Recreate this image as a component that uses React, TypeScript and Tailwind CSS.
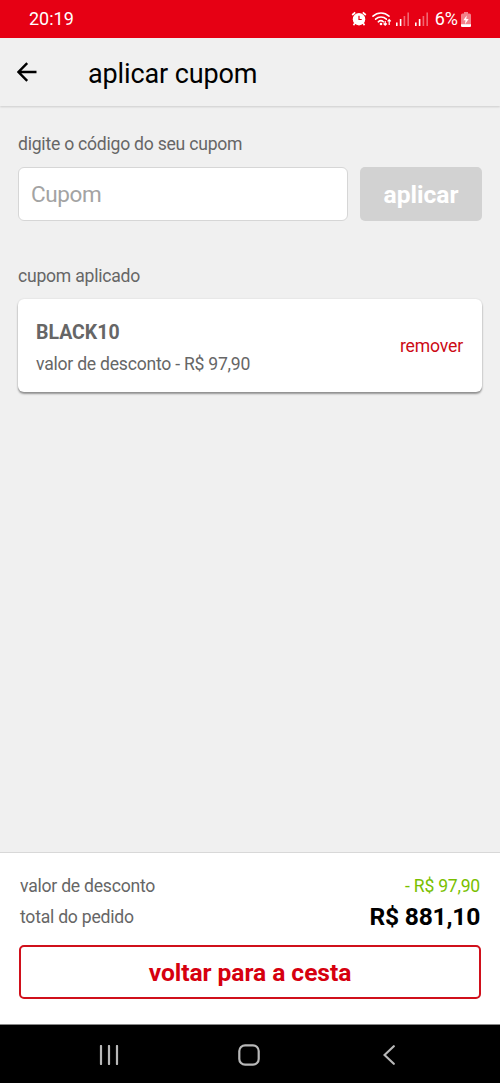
const AlarmIcon = () => (
  <svg width="16" height="16" viewBox="0 0 16 16" fill="none">
    <path d="M1.2 4 4.2 1.3M14.8 4 11.8 1.3" stroke="#fff" strokeWidth="1.7" />
    <circle cx="8" cy="8.2" r="6.2" fill="#fff" />
    <path d="m3.8 12.2-1.3 2M12.2 12.2l1.3 2" stroke="#fff" strokeWidth="1.6" />
    <path d="M8 4.8v3.7h2.7" stroke="#e60014" strokeWidth="1.2" />
  </svg>
);

const WifiIcon = () => (
  <svg width="20" height="16" viewBox="0 0 20 16" fill="none">
    <g stroke="#fff" strokeWidth="1.6" strokeLinecap="round">
      <path d="M1 5.2C5.6 1 12.4 1 17 5.2" />
      <path d="M3.6 8.1c3.1-2.8 7.7-2.8 10.8 0" />
      <path d="M6.3 10.8c1.6-1.4 3.6-1.4 5 0" />
    </g>
    <circle cx="9" cy="13" r="1.3" fill="#fff" />
    <path
      d="M13.2 10v4M11.6 12.5l1.6 1.7 1.6-1.7M17.2 14V8.8M15.6 10.3l1.6-1.7 1.6 1.7"
      stroke="#fff"
      strokeWidth="1.2"
    />
  </svg>
);

const SignalIcon = () => (
  <svg width="14" height="14" viewBox="0 0 14 14" fill="#fff">
    <rect x="0" y="10.5" width="1.6" height="3.5" />
    <rect x="3.8" y="7" width="1.6" height="7" />
    <rect x="7.6" y="4" width="1.6" height="10" opacity="0.4" />
    <rect x="11.4" y="0.5" width="1.6" height="13.5" opacity="0.4" />
  </svg>
);

const BatteryIcon = () => (
  <svg width="10" height="15" viewBox="0 0 10 15">
    <path
      d="M3 0h4v1.5h1.5Q10 1.5 10 3v10.5Q10 15 8.5 15h-7Q0 15 0 13.5V3q0-1.500 1.500-1.500H3z"
      fill="#fff"
      opacity="0.5"
    />
    <path d="M0 12.3h10v1.2Q10 15 8.5 15h-7Q0 15 0 13.5z" fill="#fff" />
    <path d="M5.7 3.5 2.3 8.3h2.2l-.5 3.9 3.7-5.2H5.3z" fill="#fff" />
  </svg>
);

const StatusBar = () => (
  <div className="flex h-[38px] items-center bg-[#e60014] px-[29px] tracking-normal text-white">
    <span className="text-[18px] leading-[38px]">20:19</span>
    <div className="ml-auto flex items-center">
      <AlarmIcon />
      <div className="ml-[5px]">
        <WifiIcon />
      </div>
      <div className="ml-1">
        <SignalIcon />
      </div>
      <div className="ml-[5px]">
        <SignalIcon />
      </div>
      <span className="ml-1.5 mr-[3px] text-[18px] leading-[38px]">6%</span>
      <BatteryIcon />
    </div>
  </div>
);

const Header = () => (
  <header className="flex h-[68px] items-center bg-[#f0f0f0] pl-[17px] shadow-[0_1px_2px_rgba(0,0,0,0.15)]">
    <button aria-label="voltar">
      <svg width="20" height="20" viewBox="0 0 20 20" fill="none">
        <path d="M19.5 10H1.8M10.2 1.2 1.5 10l8.7 8.8" stroke="#000" strokeWidth="2.4" />
      </svg>
    </button>
    <h1 className="ml-[51px] mt-1 text-[27px] leading-8 tracking-[-0.12px] text-black">
      aplicar cupom
    </h1>
  </header>
);

const NavBar = () => (
  <nav className="flex h-[59px] items-center border-t border-[#888] bg-black pb-0.5 pl-[99px] pt-1">
    <svg width="20" height="20" viewBox="0 0 20 20" fill="none">
      <path d="M2 1v18M10 1v18M18 1v18" stroke="#b8b8b8" strokeWidth="2.2" strokeLinecap="round" />
    </svg>
    <svg className="ml-[119px]" width="22" height="22" viewBox="0 0 22 22" fill="none">
      <rect x="1.3" y="1.3" width="19.4" height="19.4" rx="5.8" stroke="#b8b8b8" strokeWidth="2.2" />
    </svg>
    <svg className="ml-[123px]" width="12" height="20" viewBox="0 0 12 20" fill="none">
      <path d="M10.8 1.2 1.5 10l9.3 8.8" stroke="#b8b8b8" strokeWidth="2.2" strokeLinecap="round" />
    </svg>
  </nav>
);

const App = () => {
  return (
    <div className="flex h-[1083px] w-[500px] flex-col overflow-hidden bg-[#f0f0f0] font-['Roboto',sans-serif] text-[17.6px] tracking-[-0.24px] text-[#666]">
      <StatusBar />
      <Header />

      <main className="flex-1 px-[18px] pt-[27px]">
        <p className="leading-[22px]">digite o código do seu cupom</p>
        <div className="mt-3 flex gap-3">
          <input
            type="text"
            placeholder="Cupom"
            className="h-[54px] w-[330px] rounded-md border border-[#d6d6d6] bg-white px-3 text-[22.5px] tracking-[-0.4px] placeholder:text-[#a3a3a3]"
          />
          <button className="h-[54px] flex-1 rounded-[5px] bg-[#d2d2d2] pt-0.5 text-[24.6px] font-bold tracking-normal text-white">
            aplicar
          </button>
        </div>

        <p className="mt-11 leading-[22px]">cupom aplicado</p>
        <div className="mt-3 flex h-[93px] items-center justify-between rounded-md bg-white pl-[18px] pr-[19px] pt-1 shadow-[0_2px_2px_rgba(0,0,0,0.38),0_0_2px_rgba(0,0,0,0.12)]">
          <div className="pt-0.5">
            <p className="text-[19.5px] font-bold leading-[30px] tracking-normal">BLACK10</p>
            <p className="leading-8">valor de desconto - R$ 97,90</p>
          </div>
          <button className="mb-0.5 tracking-[-0.15px] text-[#cc0a14]">remover</button>
        </div>
      </main>

      <footer className="h-[172px] border-t border-[#d8d8d8] bg-white px-5 pt-[18px]">
        <div className="flex items-center justify-between leading-[30px]">
          <span>valor de desconto</span>
          <span className="text-[#7abf00]">- R$ 97,90</span>
        </div>
        <div className="flex items-center justify-between leading-8">
          <span>total do pedido</span>
          <span className="text-[24.6px] font-bold text-black">R$ 881,10</span>
        </div>
        <button className="-ml-px mt-3 h-[54px] w-[462px] rounded-[5px] border-2 border-[#d0101b] pt-0.5 text-[24.6px] font-bold tracking-[-0.05px] text-[#d6000f]">
          voltar para a cesta
        </button>
      </footer>

      <NavBar />
    </div>
  );
};

export default App;
